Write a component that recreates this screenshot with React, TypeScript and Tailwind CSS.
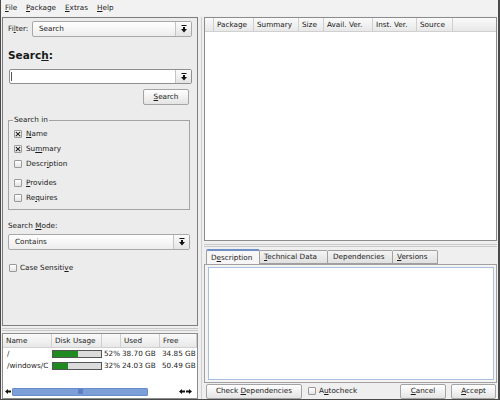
import React from 'react';

const U = ({ children }: { children: React.ReactNode }) => (
  <span className="underline underline-offset-[1px] decoration-[0.5px]">{children}</span>
);

function DropArrow() {
  return (
    <svg width="6" height="8" viewBox="0 0 6 8">
      <rect x="0.5" y="0" width="5" height="1" fill="#111" />
      <path d="M2 2h2v2h2L3 7.5 0 4h2z" fill="#111" />
    </svg>
  );
}

function DropBtn() {
  return (
    <div className="w-[16px] h-full border-l border-[#c4c4c4] bg-gradient-to-b from-[#fbfbfb] to-[#e4e4e4] flex items-center justify-center">
      <DropArrow />
    </div>
  );
}

function Combo({ text, className }: { text: string; className: string }) {
  return (
    <div
      className={`flex items-stretch border border-[#a8a8a8] rounded-[2px] bg-gradient-to-b from-[#ffffff] to-[#ededed] ${className}`}
    >
      <div className="flex-1 flex items-center pl-[6px]">{text}</div>
      <DropBtn />
    </div>
  );
}

function Check({ checked }: { checked?: boolean }) {
  return (
    <div className="w-[8px] h-[8px] border border-[#9a9a9a] rounded-[1px] bg-gradient-to-b from-[#ffffff] to-[#e3e3e3] flex items-center justify-center shrink-0">
      {checked && (
        <svg width="6" height="6" viewBox="0 0 6 6">
          <path d="M0.8 0.8L5.2 5.2M5.2 0.8L0.8 5.2" stroke="#222" strokeWidth="1.1" />
        </svg>
      )}
    </div>
  );
}

function Button({ children, className }: { children: React.ReactNode; className: string }) {
  return (
    <div
      className={`flex items-center justify-center border border-[#a4a4a4] rounded-[2px] bg-gradient-to-b from-[#ffffff] to-[#e4e4e4] ${className}`}
    >
      <span>{children}</span>
    </div>
  );
}

const pkgCols = [
  { label: '', w: 'w-[9px]' },
  { label: 'Package', w: 'w-[40px]' },
  { label: 'Summary', w: 'w-[45px]' },
  { label: 'Size', w: 'w-[25px]' },
  { label: 'Avail. Ver.', w: 'w-[49px]' },
  { label: 'Inst. Ver.', w: 'w-[44px]' },
  { label: 'Source', w: 'w-[36px]' },
];

const diskCols = [
  { label: 'Name', w: 'w-[49px]' },
  { label: 'Disk Usage', w: 'w-[50px]' },
  { label: '', w: 'w-[19px]' },
  { label: 'Used', w: 'w-[39px]' },
  { label: 'Free', w: 'flex-1' },
];

const disks = [
  { name: '/', pct: 52, used: '38.70 GB', free: '34.85 GB' },
  { name: '/windows/C', pct: 32, used: '24.03 GB', free: '50.49 GB' },
];

export default function App() {
  return (
    <div className="w-[500px] h-[400px] bg-[#efefef] border-l border-r-2 border-b border-[#4a4a4a] flex flex-col text-[7.25px] leading-none text-[#1a1a1a] font-['DejaVu_Sans',sans-serif] overflow-hidden">
      {/* menu bar */}
      <div className="h-[16px] flex items-center pl-[4px] bg-[#f2f2f2]">
        <span className="w-[21px]"><U>F</U>ile</span>
        <span className="w-[39px]"><U>P</U>ackage</span>
        <span className="w-[32px]"><U>E</U>xtras</span>
        <span><U>H</U>elp</span>
      </div>

      <div className="flex-1 flex pt-[1px] pl-[1px] min-h-0">
        {/* left column */}
        <div className="w-[196px] flex flex-col">
          <div className="h-[309px] border border-[#7e7e7e] bg-[#ececec] flex flex-col">
            <div className="mt-[3px] h-[16px] flex items-center pl-[5px]">
              <span className="w-[24px]">Fi<U>l</U>ter:</span>
              <Combo text="Search" className="w-[160px] h-[16px]" />
            </div>
            <div className="mt-[12px] h-[13px] pl-[5px] flex items-center text-[10.5px] font-bold">
              <span>Searc<U>h</U>:</span>
            </div>
            <div className="mt-[7px] ml-[6px] w-[183px] h-[15px] flex border border-[#8f8f8f] rounded-[2px] bg-white">
              <div className="flex-1 border-l border-[#555] my-[2px] ml-[1px]" />
              <DropBtn />
            </div>
            <Button className="mt-[5px] ml-[140px] w-[46px] h-[16px]">
              <U>S</U>earch
            </Button>
            <fieldset className="mt-[11px] ml-[5px] w-[182px] h-[94px] border border-[#a3a3a3] px-[5px]">
              <legend className="px-[1px] ml-[-1px] h-[8px] flex items-center">Search in</legend>
              <div className="mt-[2px]" />
              <div className="h-[15px] flex items-center gap-[4px]"><Check checked /><span><U>N</U>ame</span></div>
              <div className="h-[15px] flex items-center gap-[4px]"><Check checked /><span>Su<U>m</U>mary</span></div>
              <div className="h-[15px] flex items-center gap-[4px]"><Check /><span>Descr<U>i</U>ption</span></div>
              <div className="h-[4px]" />
              <div className="h-[15px] flex items-center gap-[4px]"><Check /><span><U>P</U>rovides</span></div>
              <div className="h-[15px] flex items-center gap-[4px]"><Check /><span>Re<U>q</U>uires</span></div>
            </fieldset>
            <div className="mt-[10px] h-[12px] pl-[5px] flex items-center">
              <span>Search <U>M</U>ode:</span>
            </div>
            <Combo text="Contains" className="mt-[2px] ml-[5px] w-[182px] h-[16px]" />
            <div className="mt-[12px] h-[12px] pl-[6px] flex items-center gap-[3px]">
              <Check />
              <span>Case Sensiti<U>v</U>e</span>
            </div>
          </div>

          {/* splitter */}
          <div className="h-[7px] flex flex-col justify-center">
            <div className="h-[3px] border-t border-b border-[#c9c9c9]" />
          </div>

          {/* disk table */}
          <div className="flex-1 border border-[#8c8c8c] bg-white flex flex-col">
            <div className="h-[14px] flex bg-gradient-to-b from-[#fafafa] to-[#e8e8e8] border-b border-[#d0d0d0]">
              {diskCols.map((c, i) => (
                <div key={i} className={`${c.w} flex items-center pl-[3px] border-r border-[#cfcfcf]`}>
                  {c.label}
                </div>
              ))}
            </div>
            {disks.map((d) => (
              <div key={d.name} className="h-[12px] flex items-center">
                <div className="w-[49px] pl-[4px]">{d.name}</div>
                <div className="w-[50px] h-[8px] border border-[#555] bg-[#dcdcdc]">
                  <div className="h-full bg-[#1f8a1f]" style={{ width: `${d.pct}%` }} />
                </div>
                <div className="w-[20px] pl-[2px]">{d.pct}%</div>
                <div className="w-[39px]">{d.used}</div>
                <div className="flex-1 pl-[1px]">{d.free}</div>
              </div>
            ))}
            <div className="flex-1" />
            <div className="h-[9px] mb-[2px] flex items-center">
              <div className="w-[9px] flex items-center justify-center">
                <svg width="6" height="5" viewBox="0 0 6 5"><path d="M0 2.5L3 0v1.5h3v2H3V5z" fill="#111" /></svg>
              </div>
              <div className="w-[136px] h-[8px] bg-[#7d9fd8] border border-[#6b8ccb] rounded-[1px] flex items-center justify-center">
                <div className="w-[5px] h-[5px] bg-[#5a7fc4]" />
              </div>
              <div className="flex-1" />
              <div className="w-[16px] flex items-center gap-[1px] mr-[2px]">
                <svg width="6" height="5" viewBox="0 0 6 5"><path d="M0 2.5L3 0v1.5h3v2H3V5z" fill="#111" /></svg>
                <svg width="6" height="5" viewBox="0 0 6 5"><path d="M6 2.5L3 0v1.5H0v2h3V5z" fill="#111" /></svg>
              </div>
            </div>
          </div>
        </div>

        {/* vertical splitter */}
        <div className="w-[6px] flex justify-center">
          <div className="w-[1px] bg-[#cfcfcf]" />
        </div>

        {/* right column */}
        <div className="flex-1 flex flex-col pr-[1px]">
          <div className="h-[224px] border border-[#8c8c8c] bg-white flex flex-col">
            <div className="h-[14px] flex bg-gradient-to-b from-[#fafafa] to-[#e8e8e8] border-b border-[#d0d0d0]">
              {pkgCols.map((c, i) => (
                <div key={i} className={`${c.w} flex items-center pl-[3px] border-r border-[#cfcfcf]`}>
                  {c.label}
                </div>
              ))}
            </div>
          </div>

          <div className="h-[8px] flex flex-col justify-center">
            <div className="h-[3px] border-t border-b border-[#c9c9c9]" />
          </div>

          {/* tabs */}
          <div className="h-[15px] flex items-end pl-[2px]">
            <div className="w-[54px] h-[15px] flex items-center pl-[4px] bg-[#f6f6f6] border border-b-0 border-[#a0a0a0] border-t-2 border-t-[#6f8fc8] rounded-t-[2px]">
              <span>D<U>e</U>scription</span>
            </div>
            <div className="w-[68px] h-[14px] flex items-center pl-[4px] bg-gradient-to-b from-[#f4f4f4] to-[#e0e0e0] border border-l-0 border-[#a0a0a0] rounded-tr-[2px]">
              <span><U>T</U>echnical Data</span>
            </div>
            <div className="w-[65px] h-[14px] flex items-center pl-[5px] bg-gradient-to-b from-[#f4f4f4] to-[#e0e0e0] border border-l-0 border-[#a0a0a0] rounded-tr-[2px]">
              <span>Dependencies</span>
            </div>
            <div className="w-[45px] h-[14px] flex items-center pl-[4px] bg-gradient-to-b from-[#f4f4f4] to-[#e0e0e0] border border-l-0 border-[#a0a0a0] rounded-tr-[2px]">
              <span><U>V</U>ersions</span>
            </div>
          </div>

          <div className="flex-1 border border-[#a0a0a0] bg-[#f4f4f4] p-[2px] pl-[3px]">
            <div className="w-full h-full bg-white border border-[#a9bfdd]" />
          </div>

          {/* bottom buttons */}
          <div className="h-[16px] flex items-center pl-[2px] pr-[1px]">
            <Button className="w-[96px] h-[15px]">
              Check <U>D</U>ependencies
            </Button>
            <div className="ml-[6px] flex items-center gap-[3px]">
              <Check />
              <span>A<U>u</U>tocheck</span>
            </div>
            <div className="flex-1" />
            <Button className="w-[46px] h-[15px]">
              <U>C</U>ancel
            </Button>
            <Button className="ml-[5px] w-[45px] h-[15px]">
              <U>A</U>ccept
            </Button>
          </div>
        </div>
      </div>
    </div>
  );
}
